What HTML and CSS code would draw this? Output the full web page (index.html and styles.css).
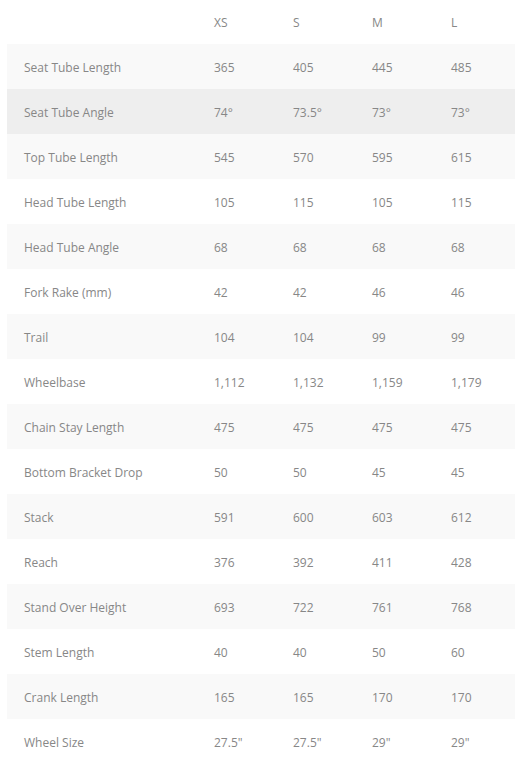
FILE: index.html
```html
<!DOCTYPE html>
<html>
<head>
<meta charset="utf-8">
<link rel="stylesheet" href="styles.css">
</head>
<body>
<div class="geo">
  <div class="row head"><span></span><span>XS</span><span>S</span><span>M</span><span>L</span></div>
  <div class="row odd"><span>Seat Tube Length</span><span>365</span><span>405</span><span>445</span><span>485</span></div>
  <div class="row hover"><span>Seat Tube Angle</span><span>74°</span><span>73.5°</span><span>73°</span><span>73°</span></div>
  <div class="row odd"><span>Top Tube Length</span><span>545</span><span>570</span><span>595</span><span>615</span></div>
  <div class="row"><span>Head Tube Length</span><span>105</span><span>115</span><span>105</span><span>115</span></div>
  <div class="row odd"><span>Head Tube Angle</span><span>68</span><span>68</span><span>68</span><span>68</span></div>
  <div class="row"><span>Fork Rake (mm)</span><span>42</span><span>42</span><span>46</span><span>46</span></div>
  <div class="row odd"><span>Trail</span><span>104</span><span>104</span><span>99</span><span>99</span></div>
  <div class="row"><span>Wheelbase</span><span>1,112</span><span>1,132</span><span>1,159</span><span>1,179</span></div>
  <div class="row odd"><span>Chain Stay Length</span><span>475</span><span>475</span><span>475</span><span>475</span></div>
  <div class="row"><span>Bottom Bracket Drop</span><span>50</span><span>50</span><span>45</span><span>45</span></div>
  <div class="row odd"><span>Stack</span><span>591</span><span>600</span><span>603</span><span>612</span></div>
  <div class="row"><span>Reach</span><span>376</span><span>392</span><span>411</span><span>428</span></div>
  <div class="row odd"><span>Stand Over Height</span><span>693</span><span>722</span><span>761</span><span>768</span></div>
  <div class="row"><span>Stem Length</span><span>40</span><span>40</span><span>50</span><span>60</span></div>
  <div class="row odd"><span>Crank Length</span><span>165</span><span>165</span><span>170</span><span>170</span></div>
  <div class="row"><span>Wheel Size</span><span>27.5"</span><span>27.5"</span><span>29"</span><span>29"</span></div>
</div>
</body>
</html>
```
FILE: styles.css
```css
html, body {
  margin: 0;
  padding: 0;
  background: #fff;
}
body {
  padding: 0 8px 0 7px;
  font-family: "Open Sans", "Liberation Sans", sans-serif;
  font-size: 12px;
  color: #878787;
}
.geo {
  display: flex;
  flex-direction: column;
  width: 508px;
}
.row {
  display: grid;
  grid-template-columns: 190px 79px 79px 79px 1fr;
  height: 45px;
  align-items: center;
  background: #fff;
}
.row span {
  padding-left: 17px;
  padding-top: 2px;
  line-height: 18px;
}
.row.head {
  height: 44px;
}
.row.odd {
  background: #f9f9f9;
}
.row.hover {
  background: #eeeeee;
}
```
